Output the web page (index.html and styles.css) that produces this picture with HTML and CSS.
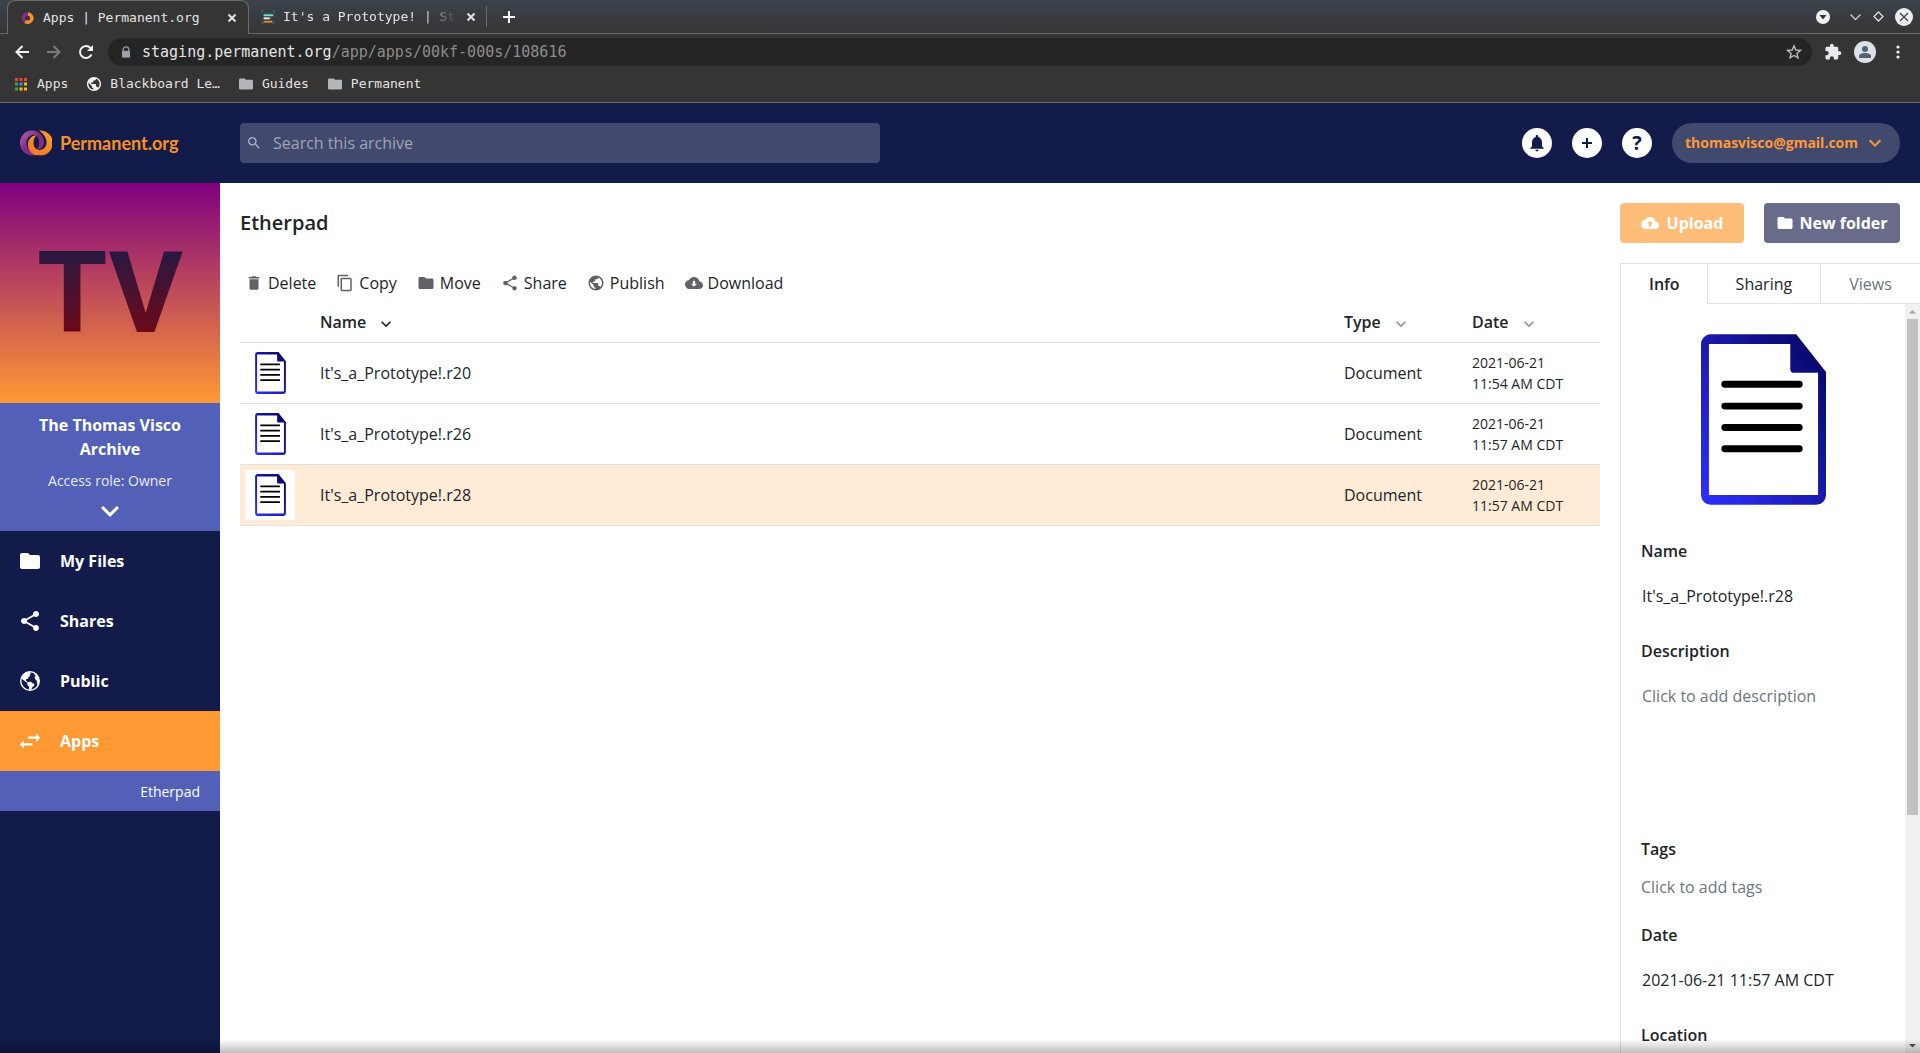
FILE: index.html
```html
<!DOCTYPE html>
<html lang="en">
    <head>
        <meta charset="utf-8">
        <title>Apps | Permanent.org</title>
        <link rel="stylesheet" href="styles.css">
    </head>
    <body>
        <!-- shared icons -->
        <svg class="defs" width="0" height="0" aria-hidden="true">
            <defs>
                <linearGradient id="docBlue" x1="1" y1="0" x2="0" y2="1">
                    <stop offset="0" stop-color="#04045c"/>
                    <stop offset="1" stop-color="#2f2fff"/>
                </linearGradient>
                <linearGradient id="ringPurple" x1="0" y1="0" x2="1" y2="1">
                    <stop offset="0" stop-color="#b06ab3"/>
                    <stop offset="0.5" stop-color="#7b2a83"/>
                    <stop offset="1" stop-color="#8a2f8f"/>
                </linearGradient>
                <linearGradient id="ringOrange" x1="0" y1="1" x2="1" y2="0">
                    <stop offset="0" stop-color="#f26a2a"/>
                    <stop offset="1" stop-color="#fba31c"/>
                </linearGradient>
                <symbol id="rings" viewBox="0 0 32 26">
                    <path d="M19 .5a12.500 12.500 0 1 1-11 14c0-5 4-9 8-9c-4 4-4 14 3 14.500c6 0 8-5 7.500-8.500c-.5-5-4-8.500-7.500-11z" fill="url(#ringOrange)"/>
                    <path d="M12 .5a12 12.500 0 1 0 3 24.600a10 10 0 0 1-5-4.600c-5-4-5-12 1-15c5-2 9 3 8 8c0 3-1 5-3 6c4 1 8-3 8-8a12 12 0 0 0-12-11z" fill="url(#ringPurple)"/>
                    <path d="M8 14.500c0-5 4-9 8-9c-4 4-4 14 3 14.500l-2 5.500c-6-1-9-6-9-11z" fill="url(#ringOrange)"/>
                </symbol>
                <symbol id="folder" viewBox="0 0 24 24"><path d="M10 4H4c-1.100 0-1.990.9-1.990 2L2 18c0 1.100.9 2 2 2h16c1.100 0 2-.9 2-2V8c0-1.100-.9-2-2-2h-8l-2-2z"/></symbol>
                <symbol id="trash" viewBox="0 0 24 24"><path d="M6 19c0 1.100.9 2 2 2h8c1.100 0 2-.9 2-2V7H6v12zM19 4h-3.500l-1-1h-5l-1 1H5v2h14V4z"/></symbol>
                <symbol id="copy" viewBox="0 0 24 24"><path d="M16 1H4c-1.100 0-2 .9-2 2v14h2V3h12V1zm3 4H8c-1.100 0-2 .9-2 2v14c0 1.100.9 2 2 2h11c1.100 0 2-.9 2-2V7c0-1.100-.9-2-2-2zm0 16H8V7h11v14z"/></symbol>
                <symbol id="share" viewBox="0 0 24 24"><path d="M18 16.080c-.76 0-1.440.3-1.960.77L8.910 12.700c.05-.23.09-.46.09-.7s-.04-.47-.09-.7l7.050-4.110c.54.5 1.250.81 2.040.81 1.660 0 3-1.340 3-3s-1.340-3-3-3-3 1.340-3 3c0 .24.04.47.09.7L8.040 9.810C7.500 9.310 6.790 9 6 9c-1.660 0-3 1.340-3 3s1.340 3 3 3c.79 0 1.500-.31 2.040-.81l7.120 4.160c-.05.21-.08.43-.08.65 0 1.610 1.310 2.920 2.920 2.920s2.920-1.310 2.920-2.920-1.310-2.920-2.920-2.920z"/></symbol>
                <symbol id="globe" viewBox="0 0 24 24"><path d="M12 2C6.480 2 2 6.480 2 12s4.480 10 10 10 10-4.480 10-10S17.520 2 12 2zm-1 17.930c-3.950-.49-7-3.850-7-7.930 0-.62.08-1.210.21-1.790L9 15v1c0 1.100.9 2 2 2v1.930zm6.900-2.540c-.26-.81-1-1.390-1.900-1.390h-1v-3c0-.55-.45-1-1-1H8v-2h2c.55 0 1-.45 1-1V7h2c1.100 0 2-.9 2-2v-.41c2.930 1.190 5 4.060 5 7.410 0 2.080-.8 3.970-2.100 5.390z"/></symbol>
                <symbol id="earth" viewBox="0 0 24 24"><circle cx="12" cy="12" r="9.300" fill="none" stroke="currentColor" stroke-width="1.300"/><path d="M3.500 8.500C5 4.500 8.500 2.800 12 2.800l1 1.700-1.500.8 1 1.200-1.800 1.500-.7 1.700-1.700.3-.5 1.500 1.700 1.200-1 .8-2.500-2-2.500-1.800zM9.500 13l3.500-.3 1.300 1.500 2 .6-.3 2.200-1.900 1.600-1.100 2.700-1.700-.3-.4-3.400-1.700-2zM16.500 4l2.800 2.700 2 4.300v3l-1.500 2.200-.8-1.900-.3-2.700-1.500-1.300-.6-2.300.9-1.500-1.100-1z"/></symbol>
                <symbol id="cloud-down" viewBox="0 0 24 24"><path d="M19.350 10.040C18.670 6.590 15.640 4 12 4 9.110 4 6.600 5.640 5.350 8.040 2.340 8.360 0 10.910 0 14c0 3.310 2.690 6 6 6h13c2.760 0 5-2.240 5-5 0-2.640-2.050-4.780-4.650-4.960zM16 13l-4 4-4-4h2.500V9h3v4z"/></symbol>
                <symbol id="cloud-up" viewBox="0 0 24 24"><path d="M19.350 10.040C18.670 6.590 15.640 4 12 4 9.110 4 6.600 5.640 5.350 8.040 2.340 8.360 0 10.910 0 14c0 3.310 2.690 6 6 6h13c2.760 0 5-2.240 5-5 0-2.640-2.050-4.780-4.650-4.960zM13.500 13v4h-3v-4H8l4-4 4 4z"/></symbol>
                <symbol id="chevron" viewBox="0 0 24 24"><path d="M7.410 8.590L12 13.170l4.590-4.580L18 10l-6 6-6-6z"/></symbol>
                <symbol id="swap" viewBox="0 0 24 24"><path d="M10 7.500h8V4.500l4.200 4.200L18 13v-3.200h-8zM14.500 14.200H6V11.500L1.800 15.600 6 19.800v-3.200h8.500z"/></symbol>
                <symbol id="bell" viewBox="0 0 24 24"><path d="M12 22c1.100 0 2-.9 2-2h-4c0 1.100.89 2 2 2zm6-6v-5c0-3.070-1.640-5.640-4.500-6.320V4c0-.83-.67-1.500-1.500-1.500s-1.500.67-1.500 1.500v.68C7.630 5.360 6 7.920 6 11v5l-2 2v1h16v-1l-2-2z"/></symbol>
                <symbol id="search" viewBox="0 0 24 24"><path d="M15.500 14h-.79l-.28-.27C15.410 12.590 16 11.110 16 9.500 16 5.910 13.090 3 9.500 3S3 5.910 3 9.500 5.910 16 9.500 16c1.610 0 3.090-.59 4.230-1.570l.27.28v.79l5 4.990L20.490 19l-4.990-5zm-6 0C7.010 14 5 11.990 5 9.500S7.010 5 9.500 5 14 7.010 14 9.500 11.990 14 9.500 14z"/></symbol>
                <symbol id="close" viewBox="0 0 12 12"><path d="M2.500 2.500l7 7m0-7l-7 7" fill="none" stroke="currentColor" stroke-width="2"/></symbol>
                <symbol id="doc" viewBox="0 0 126 172">
                    <path d="M9 0H96L126 38V162a10 10 0 0 1-10 10H10a10 10 0 0 1-10-10V10A10 10 0 0 1 9 0zM8 10V162H118V39H94a4 4 0 0 1-4-4V10z" fill="url(#docBlue)" fill-rule="evenodd"/>
                    <path d="M24 50.500h75M24 72.500h75M24 94h75M24 115.500h75" fill="none" stroke="#000" stroke-width="7" stroke-linecap="round"/>
                </symbol>
            </defs>
        </svg>

        <!-- browser window -->
        <div class="browser">
            <div class="tabstrip">
                <div class="tab tab-active">
                    <svg class="favicon" viewBox="0 0 16 16"><path d="M8 13a5 5 0 0 1-5-5c0-3 2-5 5-5" fill="none" stroke="#8a2a8a" stroke-width="4"/><path d="M8 3.500a4.700 4.700 0 1 1-3 8.500" fill="none" stroke="#f7931e" stroke-width="4"/></svg>
                    <span class="tab-title">Apps | Permanent.org</span>
                    <button class="plain" aria-label="Close tab"><svg width="12" height="12"><use href="#close"/></svg></button>
                </div>
                <div class="tab tab-back">
                    <svg class="favicon" viewBox="0 0 16 16"><path d="M3 3h10v10H3z" fill="#3f4a5c"/><path d="M1 4V1h2M13 1h2v3M1 13v2h2M15 12v3h-2" fill="none" stroke="#3a6ea5"/><path d="M3 6h11" stroke="#6fe7b4" stroke-width="2"/><path d="M3 9.500h7" stroke="#f2f2f2" stroke-width="2"/><path d="M3 13.500h10" stroke="#f08a00" stroke-width="2"/></svg>
                    <span class="tab-title fade">It's a Prototype! | St</span>
                    <button class="plain" aria-label="Close tab"><svg width="12" height="12"><use href="#close"/></svg></button>
                </div>
                <button class="plain newtab" aria-label="New tab"><svg width="14" height="14" viewBox="0 0 14 14"><path d="M7 1v12M1 7h12" stroke="currentColor" stroke-width="2"/></svg></button>
                <div class="winbtns">
                    <svg class="w-drop" width="16" height="16" viewBox="0 0 16 16"><circle cx="8" cy="8" r="7" fill="#f1f1f1"/><path d="M4.500 6h7L8 10.500z" fill="#333"/></svg>
                    <svg width="13" height="13" viewBox="0 0 13 13"><path d="M1.500 4.500l5 5 5-5" fill="none" stroke="#ccc" stroke-width="1.300"/></svg>
                    <svg width="13" height="13" viewBox="0 0 13 13"><path d="M6.500 2l4.500 4.500-4.500 4.500L2 6.500z" fill="none" stroke="#ddd" stroke-width="1.300"/></svg>
                    <svg width="18" height="18" viewBox="0 0 18 18"><circle cx="9" cy="9" r="9" fill="#eceff0"/><path d="M5 5l8 8m0-8l-8 8" stroke="#444" stroke-width="1.300"/></svg>
                </div>
            </div>
            <div class="urlrow">
                <div class="navbtns">
                    <svg width="16" height="16" viewBox="0 0 16 16"><path d="M15 8H3M8.500 2L2.500 8l6 6" fill="none" stroke="#f1f1f1" stroke-width="2"/></svg>
                    <svg width="16" height="16" viewBox="0 0 16 16"><path d="M1 8h12M7.500 2l6 6-6 6" fill="none" stroke="#7c7c7c" stroke-width="2"/></svg>
                    <svg width="16" height="16" viewBox="0 0 16 16"><path d="M13.500 10.500A6 6 0 1 1 12.500 4" fill="none" stroke="#f1f1f1" stroke-width="2"/><path d="M15 1v6H9z" fill="#f1f1f1"/></svg>
                </div>
                <div class="omnibox">
                    <svg width="8" height="12" viewBox="0 0 10 14"><path d="M1.500 6V4a3.500 3.500 0 0 1 7 0v2" fill="none" stroke="#9aa0a6" stroke-width="1.500"/><path d="M0 5.500h10V14H0z" fill="#9aa0a6"/></svg>
                    <span class="url">staging.permanent.org<i>/app/apps/00kf-000s/108616</i></span>
                    <svg width="16" height="16" viewBox="0 0 16 16"><path d="M8 1.800l1.800 4.200 4.600.4-3.500 3 1.100 4.500L8 11.500l-4 2.400 1.100-4.500-3.500-3 4.600-.4z" fill="none" stroke="#bbb" stroke-width="1.400"/></svg>
                </div>
                <div class="extbtns">
                    <svg width="18" height="18" viewBox="0 0 24 24"><path fill="#e8eaed" d="M20.500 11H19V7c0-1.100-.9-2-2-2h-4V3.500C13 2.120 11.880 1 10.500 1S8 2.120 8 3.500V5H4c-1.100 0-2 .9-2 2v3.800h1.500c1.500 0 2.700 1.200 2.700 2.700S5 16.200 3.500 16.200H2V20c0 1.100.9 2 2 2h3.800v-1.500c0-1.500 1.200-2.700 2.700-2.700s2.700 1.200 2.700 2.700V22H17c1.100 0 2-.9 2-2v-4h1.500c1.380 0 2.500-1.120 2.500-2.500S21.880 11 20.500 11z"/></svg>
                    <svg width="22" height="22" viewBox="0 0 22 22"><circle cx="11" cy="11" r="11" fill="#dde1e6"/><circle cx="11" cy="8" r="3" fill="#566074"/><path d="M5 17v-2c0-4 12-4 12 0v2z" fill="#566074"/></svg>
                    <svg width="4" height="14" viewBox="0 0 4 14"><g fill="#f1f1f1"><circle cx="2" cy="2" r="1.600"/><circle cx="2" cy="7" r="1.600"/><circle cx="2" cy="12" r="1.600"/></g></svg>
                </div>
            </div>
            <div class="bookmarks">
                <span class="bm"><svg width="14" height="14" viewBox="0 0 14 14"><path d="M1 2.500h12" stroke="#ea4335" stroke-width="3" stroke-dasharray="3 1.500"/><path d="M1 7h3M1 12h3" stroke="#34a853" stroke-width="3"/><path d="M5.500 7h3" stroke="#4285f4" stroke-width="3"/><path d="M10 7h3M10 12h3M5.500 12h3" stroke="#fbbc05" stroke-width="3"/></svg>Apps</span>
                <span class="bm"><svg width="14" height="14" viewBox="2 2 20 20"><use href="#globe" width="24" height="24" fill="#f1f1f1"/></svg>Blackboard Le…</span>
                <span class="bm"><svg width="14" height="14" viewBox="2 2 20 20"><use href="#folder" width="24" height="24" fill="#b5b6b8"/></svg>Guides</span>
                <span class="bm"><svg width="14" height="14" viewBox="2 2 20 20"><use href="#folder" width="24" height="24" fill="#b5b6b8"/></svg>Permanent</span>
            </div>
        </div>

        <header class="topbar">
            <a class="logo" href="#">
                <svg width="32" height="26"><use href="#rings"/></svg>
                <span>Permanent.org</span>
            </a>
            <div class="search">
                <svg width="16" height="16"><use href="#search"/></svg>
                <input type="text" placeholder="Search this archive" aria-label="Search this archive">
            </div>
            <div class="account">
                <button class="round" aria-label="Notifications"><svg width="20" height="20"><use href="#bell"/></svg></button>
                <button class="round" aria-label="Add"><svg width="12" height="12" viewBox="0 0 12 12"><path d="M6 1v10M1 6h10" stroke="currentColor" stroke-width="2"/></svg></button>
                <button class="round" aria-label="Help">?</button>
                <button class="user">thomasvisco@gmail.com<svg width="24" height="24"><use href="#chevron"/></svg></button>
            </div>
        </header>

        <div class="app">
            <nav class="sidebar">
                <div class="avatar"><span>TV</span></div>
                <div class="archive">
                    <div class="archive-name">The Thomas Visco Archive</div>
                    <div class="archive-role">Access role: Owner</div>
                    <svg width="36" height="36"><use href="#chevron"/></svg>
                </div>
                <a class="nav" href="#"><svg width="24" height="24"><use href="#folder"/></svg>My Files</a>
                <a class="nav" href="#"><svg width="24" height="24"><use href="#share"/></svg>Shares</a>
                <a class="nav" href="#"><svg width="24" height="24"><use href="#earth"/></svg>Public</a>
                <a class="nav active" href="#"><svg width="24" height="24"><use href="#swap"/></svg>Apps</a>
                <a class="subnav" href="#">Etherpad</a>
            </nav>

            <main class="main">
                <div class="pagehead">
                    <h1>Etherpad</h1>
                    <button class="btn btn-upload"><svg width="18" height="18"><use href="#cloud-up"/></svg>Upload</button>
                    <button class="btn btn-folder"><svg width="18" height="18"><use href="#folder"/></svg>New folder</button>
                </div>

                <div class="columns">
                    <section class="files">
                        <div class="tools">
                            <button class="tool"><svg width="18" height="18"><use href="#trash"/></svg>Delete</button>
                            <button class="tool"><svg width="18" height="18"><use href="#copy"/></svg>Copy</button>
                            <button class="tool"><svg width="18" height="18"><use href="#folder"/></svg>Move</button>
                            <button class="tool"><svg width="18" height="18"><use href="#share"/></svg>Share</button>
                            <button class="tool"><svg width="18" height="18"><use href="#globe"/></svg>Publish</button>
                            <button class="tool"><svg width="18" height="18"><use href="#cloud-down"/></svg>Download</button>
                        </div>
                        <table class="list">
                            <thead>
                                <tr>
                                    <th class="c-thumb"></th>
                                    <th class="sorted">Name<svg width="20" height="20"><use href="#chevron"/></svg></th>
                                    <th class="c-meta">Type<svg width="20" height="20"><use href="#chevron"/></svg></th>
                                    <th class="c-meta">Date<svg width="20" height="20"><use href="#chevron"/></svg></th>
                                </tr>
                            </thead>
                            <tbody>
                                <tr>
                                    <td><div class="thumb"><svg width="31" height="42"><use href="#doc"/></svg></div></td>
                                    <td>It's_a_Prototype!.r20</td>
                                    <td>Document</td>
                                    <td class="date">2021-06-21<br>11:54 AM CDT</td>
                                </tr>
                                <tr>
                                    <td><div class="thumb"><svg width="31" height="42"><use href="#doc"/></svg></div></td>
                                    <td>It's_a_Prototype!.r26</td>
                                    <td>Document</td>
                                    <td class="date">2021-06-21<br>11:57 AM CDT</td>
                                </tr>
                                <tr class="selected">
                                    <td><div class="thumb"><svg width="31" height="42"><use href="#doc"/></svg></div></td>
                                    <td>It's_a_Prototype!.r28</td>
                                    <td>Document</td>
                                    <td class="date">2021-06-21<br>11:57 AM CDT</td>
                                </tr>
                            </tbody>
                        </table>
                    </section>

                    <aside class="details">
                        <div class="dtabs">
                            <button class="dtab on">Info</button>
                            <button class="dtab">Sharing</button>
                            <button class="dtab off">Views</button>
                        </div>
                        <div class="dbody">
                            <div class="info">
                                <svg class="preview" width="125" height="171"><use href="#doc"/></svg>
                                <h2>Name</h2>
                                <div class="value">It's_a_Prototype!.r28</div>
                                <h2>Description</h2>
                                <div class="value empty tall">Click to add description</div>
                                <h2>Tags</h2>
                                <div class="tags empty">Click to add tags</div>
                                <h2>Date</h2>
                                <div class="value">2021-06-21 11:57 AM CDT</div>
                                <h2>Location</h2>
                            </div>
                            <div class="scrollbar">
                                <svg width="15" height="15" viewBox="0 0 15 15"><path d="M4 9.500h7L7.500 6z" fill="#a3a3a3"/></svg>
                                <div class="thumb-track"><div class="bar"></div></div>
                                <svg width="15" height="15" viewBox="0 0 15 15"><path d="M4 6h7L7.500 9.500z" fill="#505050"/></svg>
                            </div>
                        </div>
                    </aside>
                </div>
            </main>
        </div>
        <div class="edge"></div>
    </body>
</html>
```

FILE: styles.css
```css
*{
    box-sizing: border-box;
}
body{
    margin: 0;
    height: 100vh;
    display: flex;
    flex-direction: column;
    overflow: hidden;
    font: 16px/24px "Open Sans", "Noto Sans", sans-serif;
    color: #212529;
    background: #fff;
}
button{
    font: inherit;
    color: inherit;
    border: 0;
    padding: 0;
    background: none;
    cursor: pointer;
}
a{
    color: inherit;
    text-decoration: none;
}
svg{
    fill: currentColor;
    flex: none;
}
.defs{
    position: absolute;
}

/* browser window */
.browser{
    flex: none;
    background: #353535;
    color: #e4e4e4;
    font: 13px/20px "DejaVu Sans Mono", monospace;
    border-bottom: 1px solid #6a6a6a;
}
.tabstrip{
    display: flex;
    align-items: flex-end;
    height: 34px;
    padding: 0 7px;
    background: linear-gradient(#3c424c, #353535);
    border-bottom: 1px solid #6a6a6a;
}
.tab{
    display: flex;
    align-items: center;
    height: 33px;
    gap: 8px;
}
.tab-active{
    width: 242px;
    height: 34px;
    padding: 0 10px 6px 12px;
    padding: 0 10px 0 13px;
    margin-bottom: -1px;
    background: #353535;
    border: 1px solid #6a6a6a;
    border-bottom: 0;
    border-radius: 8px 8px 0 0;
}
.tab-back{
    width: 238px;
    padding: 0 9px 0 12px;
    border-right: 1px solid #6a6a6a;
    border-image: linear-gradient(transparent 20%, #6a6a6a 20%, #6a6a6a 80%, transparent 80%) 1;
}
.favicon{
    width: 14px;
    height: 14px;
}
.tab-title{
    flex: 1;
    white-space: nowrap;
}
.fade{
    -webkit-mask: linear-gradient(to right, #000 80%, transparent);
    mask: linear-gradient(to right, #000 80%, transparent);
}
.plain{
    display: flex;
}
.newtab{
    align-self: center;
    margin: 0 auto 0 15px;
    color: #fff;
}
.winbtns{
    display: flex;
    align-self: center;
    align-items: center;
    gap: 10px;
}
.w-drop{
    margin-right: 8px;
}
.urlrow{
    display: flex;
    align-items: center;
    height: 36px;
    padding: 0 20px 0 14px;
}
.navbtns{
    display: flex;
    gap: 16px;
    width: 94px;
}
.omnibox{
    flex: 1;
    display: flex;
    align-items: center;
    height: 28px;
    padding: 0 10px 0 14px;
    border-radius: 14px;
    background: #252525;
}
.url{
    flex: 1;
    padding-left: 12px;
    font-size: 15px;
}
.url i{
    font-style: normal;
    color: #8c8c8c;
}
.extbtns{
    display: flex;
    align-items: center;
    gap: 12px;
    padding-left: 12px;
}
.extbtns svg:last-child{
    margin-left: 8px;
}
.bookmarks{
    display: flex;
    gap: 19px;
    height: 32px;
    padding: 4px 14px 8px;
}
.bm{
    display: flex;
    align-items: center;
    gap: 9px;
}

/* top bar */
.topbar{
    flex: none;
    display: flex;
    align-items: center;
    height: 80px;
    padding: 0 20px;
    background: #131b4a;
}
.logo{
    display: flex;
    align-items: center;
    gap: 8px;
    width: 220px;
    font: 700 18px/24px Lato, sans-serif;
    color: #f7921e;
}
.search{
    display: flex;
    align-items: center;
    width: 640px;
    height: 40px;
    padding: 0 6px;
    gap: 11px;
    border-radius: 4px;
    background: #42496e;
    color: #b0b3c4;
}
.search input{
    flex: 1;
    font: inherit;
    color: #fff;
    border: 0;
    padding: 0;
    outline: 0;
    background: none;
}
.search input::placeholder{
    color: #a1a4b7;
}
.account{
    display: flex;
    align-items: center;
    gap: 20px;
    margin-left: auto;
}
.round{
    display: flex;
    align-items: center;
    justify-content: center;
    width: 30px;
    height: 30px;
    border-radius: 50%;
    background: #fff;
    color: #131b4a;
    font-size: 20px;
    font-weight: 700;
}
.user{
    display: flex;
    align-items: center;
    gap: 5px;
    height: 40px;
    padding: 0 13px;
    border-radius: 20px;
    background: #42496e;
    color: #ff9933;
    font-size: 14px;
    font-weight: 700;
}

/* sidebar */
.app{
    flex: 1;
    display: flex;
    min-height: 0;
}
.sidebar{
    flex: none;
    width: 220px;
    background: #131b4a;
    color: #fff;
}
.avatar{
    display: flex;
    align-items: center;
    justify-content: center;
    height: 220px;
    background: linear-gradient(#800080, #ff9933);
}
.avatar span{
    font-family: Roboto, sans-serif;
    font-size: 114px;
    font-weight: 700;
    line-height: 114px;
    color: transparent;
    background: linear-gradient(#2a1840 15%, #720818 90%);
    -webkit-background-clip: text;
    background-clip: text;
}
.archive{
    display: flex;
    flex-direction: column;
    align-items: center;
    height: 128px;
    padding: 10px 20px;
    background: #5260b8;
    text-align: center;
}
.archive-name{
    font-weight: 700;
}
.archive-role{
    padding-top: 8px;
    font-size: 14px;
    color: #e8eaf5;
}
.nav{
    display: flex;
    align-items: center;
    gap: 18px;
    height: 60px;
    padding: 0 18px;
    font-weight: 700;
}
.nav.active{
    background: #ff9933;
}
.subnav{
    display: block;
    padding: 9px 20px 7px;
    background: #5260b8;
    font-size: 14px;
    text-align: right;
}

/* page */
.main{
    flex: 1;
    display: flex;
    flex-direction: column;
    min-width: 0;
}
.pagehead{
    display: flex;
    gap: 20px;
    padding: 20px;
}
h1{
    flex: 1;
    margin: 0;
    font-size: 20px;
    line-height: 40px;
    font-weight: 600;
}
.btn{
    display: flex;
    align-items: center;
    justify-content: center;
    gap: 8px;
    height: 40px;
    border-radius: 4px;
    color: #fff;
    font-weight: 700;
}
.btn-upload{
    width: 124px;
    background: #ffbd7a;
}
.btn-folder{
    width: 136px;
    gap: 5px;
    background: #686c8a;
}
.columns{
    flex: 1;
    display: flex;
    min-height: 0;
}
.files{
    flex: 1;
    padding: 0 20px;
}
.tools{
    display: flex;
    gap: 20px;
    height: 40px;
    padding: 0 5px;
}
.tool{
    display: flex;
    align-items: center;
    gap: 5px;
}
.tool svg{
    color: #5f6367;
}

/* file list */
.list{
    width: 100%;
    table-layout: fixed;
    border-collapse: collapse;
}
.list th{
    height: 39px;
    padding: 0;
    text-align: left;
    font-weight: 600;
    border-bottom: 1px solid #dee2e6;
}
.list th svg{
    margin-left: 10px;
    vertical-align: middle;
    color: #8f8f8f;
}
.list th.sorted svg{
    color: #212529;
}
.c-thumb{
    width: 80px;
}
.c-meta{
    width: 128px;
}
.list td{
    height: 61px;
    padding: 0;
    border-bottom: 1px solid #dee2e6;
}
.list .date{
    font-size: 14px;
    line-height: 21px;
}
.thumb{
    display: flex;
    align-items: center;
    justify-content: center;
    width: 50px;
    height: 50px;
    margin-left: 5px;
    background: #fff;
}
.selected{
    background: #ffebd6;
}

/* details panel */
.details{
    display: flex;
    flex-direction: column;
    width: 300px;
    border-top: 1px solid #dee2e6;
    border-left: 1px solid #dee2e6;
}
.dtabs{
    display: flex;
    flex: none;
    height: 40px;
}
.dtab{
    padding: 0 28px;
    border-bottom: 1px solid #dee2e6;
}
.dtab + .dtab{
    border-left: 1px solid #dee2e6;
}
.dtab.on{
    padding: 0 27px 0 28px;
    font-weight: 600;
    border-bottom: 0;
}
.dtab.off{
    flex: 1;
    color: #6c757d;
}
.dbody{
    flex: 1;
    display: flex;
    min-height: 0;
    overflow: hidden;
}
.info{
    flex: 1;
    padding: 30px 20px 0;
}
.preview{
    display: block;
    margin: 0 auto 34px;
}
h2{
    margin: 0;
    font-size: 16px;
    line-height: 24px;
    font-weight: 600;
}
.value{
    padding: 21px 1px 31px;
}
.tall{
    height: 174px;
}
.tags{
    padding: 14px 0 24px;
}
.empty{
    color: #6c757d;
}
.scrollbar{
    display: flex;
    flex-direction: column;
    width: 15px;
    background: #f1f1f1;
}
.thumb-track{
    flex: 1;
    padding: 0 2px;
}
.bar{
    height: 69%;
    background: #c1c1c1;
}
/* soft shadow along the bottom of the window */
.edge{
    position: fixed;
    left: 0;
    right: 0;
    bottom: 0;
    height: 14px;
    background: linear-gradient(rgba(0,0,0,0), rgba(0,0,0,.25));
    pointer-events: none;
}
```
